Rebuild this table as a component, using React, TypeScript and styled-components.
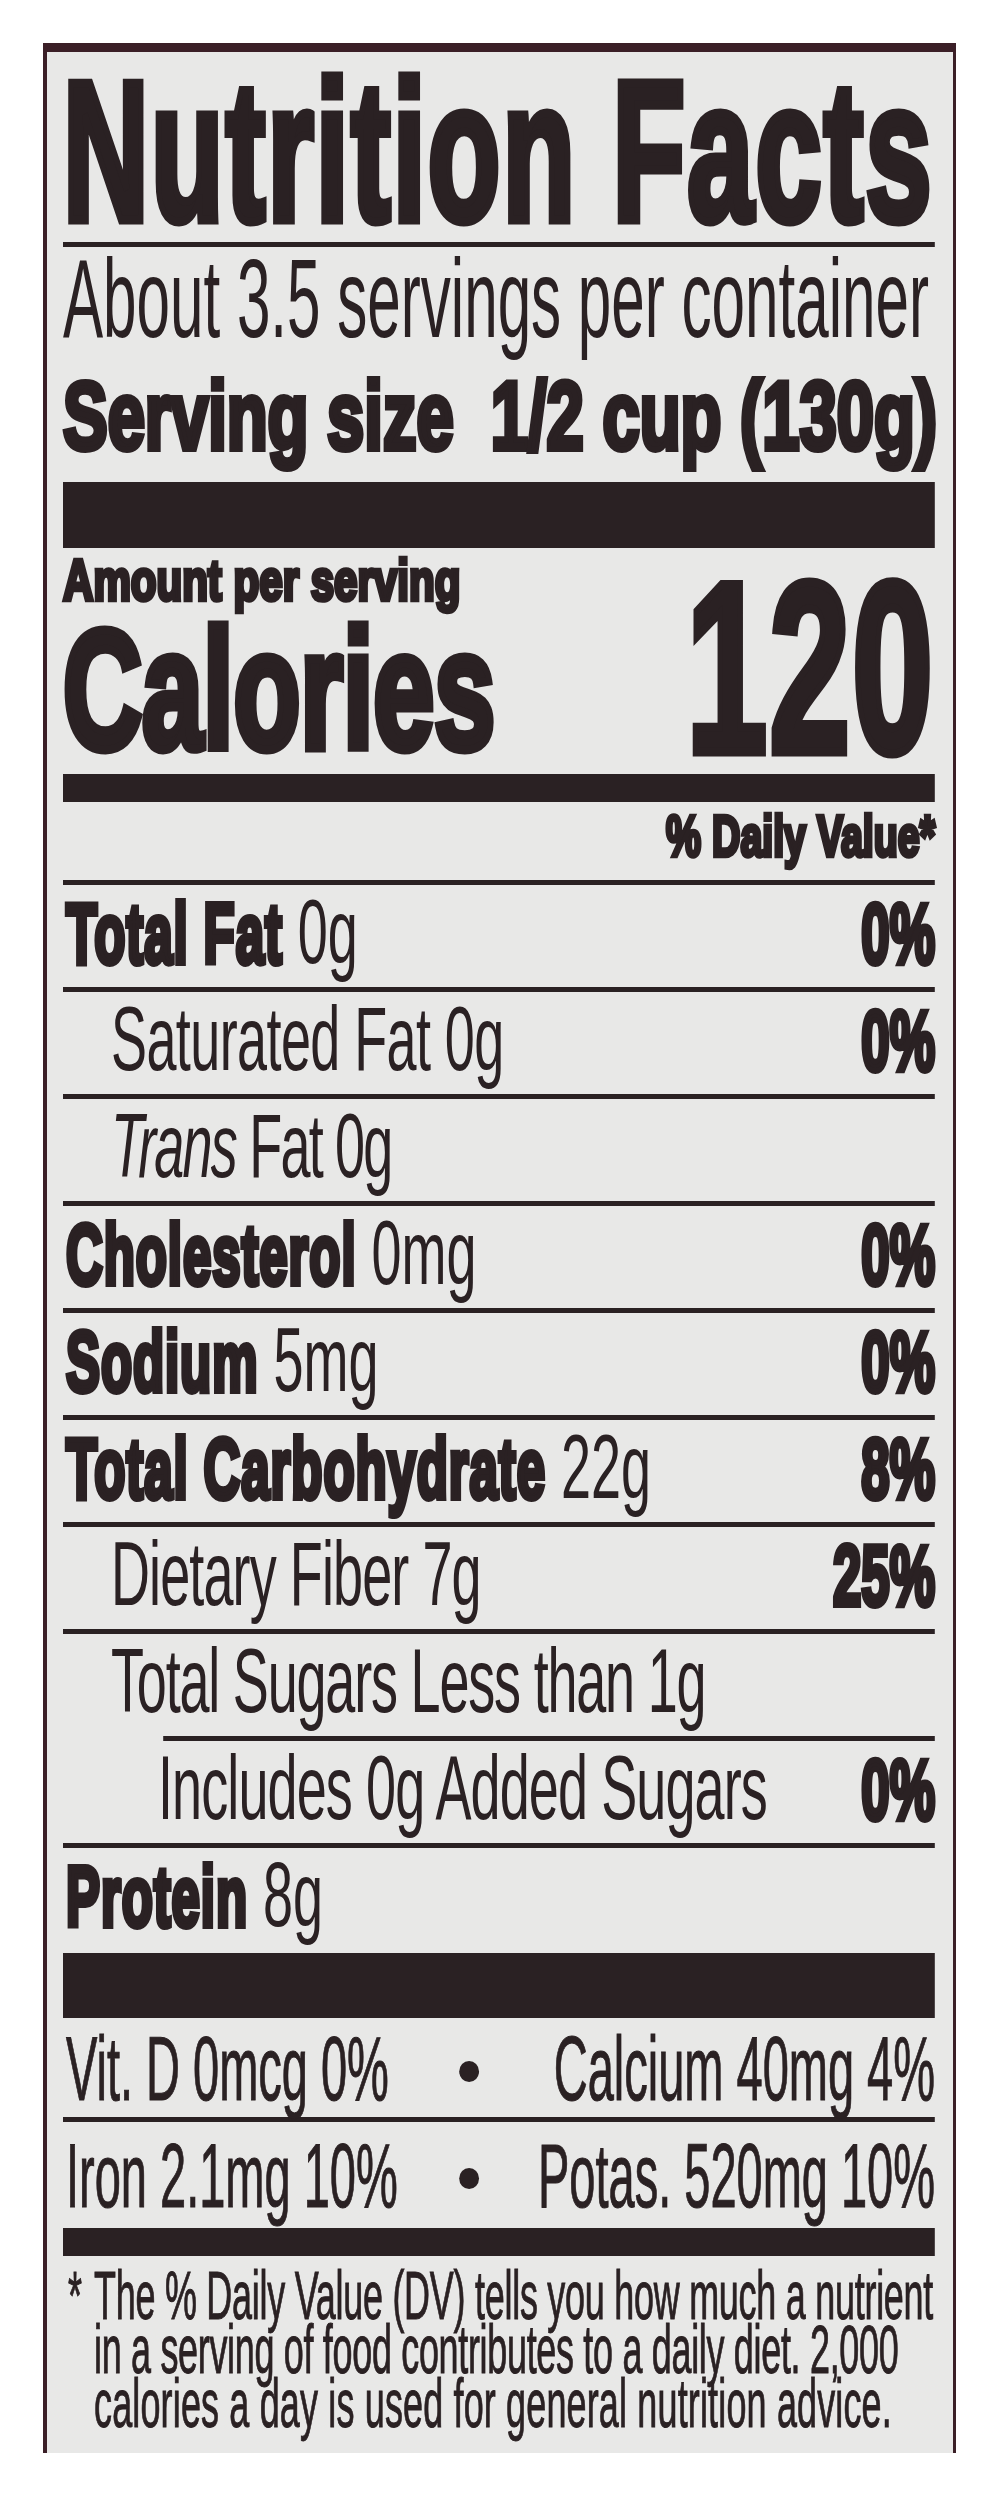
import React from 'react';
import styled, { createGlobalStyle, css } from 'styled-components';

/* The label is laid out in a "natural" space and condensed horizontally,
   like the condensed grotesque used on printed nutrition panels. */
const S = 0.6;
const CONTENT = 872;
const INNER = +(CONTENT / S).toFixed(2);
const nat = (v: number, k = 1) => +(v / (S * k)).toFixed(2);

const INK = '#2a2123';
const FRAME = '#3b1f27';
const PAPER = '#e8e8e7';

const stretch = (k: number) => css`
  transform: scaleX(${k});
  transform-origin: left center;
`;

const condense = (k: number) => css`
  box-sizing: border-box;
  width: ${+(INNER / k).toFixed(2)}px;
  transform: scaleX(${k});
  transform-origin: left center;
`;

const GlobalStyle = createGlobalStyle`
  html, body { margin: 0; padding: 0; background: #ffffff; }
  body { font-family: "Liberation Sans", Arial, Helvetica, sans-serif; }
`;

const Page = styled.main`
  padding: 43px 0 45px 43px;
`;

const Panel = styled.section`
  box-sizing: border-box;
  width: 913px;
  overflow: hidden;
  background: ${PAPER};
  border-top: 9px solid ${FRAME};
  border-left: 4px solid ${FRAME};
  border-right: 3px solid ${FRAME};
  padding: 10px 18px 0 16px;
`;

const Squeeze = styled.div`
  width: ${INNER}px;
  transform: scaleX(${S});
  transform-origin: 0 0;
  color: ${INK};
  white-space: nowrap;
  font-family: "Liberation Sans", Arial, Helvetica, sans-serif;
`;

const Heading = styled.h1`
  margin: 0;
  font-size: 198px;
  line-height: 180px;
  font-weight: 700;
  letter-spacing: 3.6px;
  -webkit-text-stroke: 9px ${INK};
`;

const Rule = styled.div<{ $h: number; $inset?: number }>`
  height: ${(p) => p.$h}px;
  margin-left: ${(p) => p.$inset ?? 0}px;
  background: ${INK};
`;

const Servings = styled.p`
  margin: 0;
  font-size: 112px;
  line-height: 103px;
  font-weight: 400;
  ${stretch(0.895)}
`;

const ServingSize = styled.p`
  margin: 0;
  font-size: 97px;
  line-height: 132px;
  font-weight: 700;
  white-space: pre;
  -webkit-text-stroke: 6px ${INK};
  ${stretch(1.15)}
`;

const CalorieBlock = styled.div`
  display: flex;
  justify-content: space-between;
  align-items: flex-end;
  padding-bottom: 7px;
`;

const CalorieLabels = styled.div`
  flex: 1;
  min-width: 0;
  display: flex;
  flex-direction: column;
`;

const AmountPer = styled.div`
  font-size: 57px;
  line-height: 64px;
  font-weight: 700;
  -webkit-text-stroke: 4.5px ${INK};
  ${stretch(1.23)}
`;

const CaloriesWord = styled.div`
  font-size: 169px;
  line-height: 155px;
  font-weight: 700;
  -webkit-text-stroke: 9px ${INK};
  ${stretch(1.08)}
`;

const CaloriesValue = styled.div`
  flex: none;
  font-size: 243px;
  line-height: 198px;
  font-weight: 700;
  letter-spacing: 3px;
  -webkit-text-stroke: 9px ${INK};
`;

const DailyValueHead = styled.div`
  font-size: 57px;
  line-height: 68px;
  font-weight: 700;
  text-align: right;
  padding-bottom: 10px;
  -webkit-text-stroke: 4.5px ${INK};
  ${condense(1.15)}
`;

const INDENT = [nat(3), nat(48), nat(95)];

const NutrientRow = styled.div<{ $level: number; $pad?: number }>`
  display: flex;
  justify-content: space-between;
  align-items: baseline;
  font-size: 90px;
  line-height: 94px;
  padding: 0 0 ${(p) => p.$pad ?? 8}px ${(p) => INDENT[p.$level]}px;
`;

const NutrientLabel = styled.span``;

const NutrientName = styled.b`
  font-size: 85px;
  line-height: 1;
  font-weight: 700;
  letter-spacing: 1.5px;
  -webkit-text-stroke: 6px ${INK};
`;

const NutrientAmount = styled.span<{ $ls: number }>`
  letter-spacing: ${(p) => p.$ls}px;
`;

const Emphasis = styled.i`
  font-style: italic;
`;

const Percent = styled.b`
  font-size: 85px;
  line-height: 1;
  font-weight: 700;
  -webkit-text-stroke: 6px ${INK};
`;

const VK = 0.87;

const VitaminRow = styled.div<{ $top: number; $bottom: number }>`
  display: grid;
  grid-template-columns: ${nat(384, VK)}px ${nat(38, VK)}px 1fr;
  align-items: center;
  font-size: 90px;
  line-height: 94px;
  padding: ${(p) => p.$top}px 0 ${(p) => p.$bottom}px ${nat(3, VK)}px;
  -webkit-text-stroke: 1px ${INK};
  ${condense(VK)}
`;

const VitaminStart = styled.span`
  justify-self: start;
`;

const VitaminEnd = styled.span`
  justify-self: end;
`;

const Dot = styled.span`
  justify-self: center;
  width: ${nat(20, VK)}px;
  height: 21px;
  margin-top: 4px;
  border-radius: 50%;
  background: ${INK};
`;

const FK = 0.88;

const Footnote = styled.div`
  display: grid;
  grid-template-columns: ${nat(31, FK)}px 1fr;
  font-size: 68px;
  line-height: 54px;
  padding: 12px 0 23px;
  -webkit-text-stroke: 1px ${INK};
  ${condense(FK)}
`;

const Star = styled.span`
  padding-left: ${nat(5, FK)}px;
`;

const FootLines = styled.div``;

const FootLine = styled.span<{ $ls: number }>`
  display: block;
  letter-spacing: ${(p) => p.$ls}px;
`;

type Nutrient = {
  name?: string;
  amount: React.ReactNode;
  dv?: string;
  level: number;
  ls?: number;
  rule?: 'full' | 'inset';
};

const NUTRIENTS: Nutrient[] = [
  { name: 'Total Fat', amount: ' 0g', dv: '0%', level: 0 },
  { amount: 'Saturated Fat 0g', dv: '0%', level: 1, ls: -1 },
  {
    amount: (
      <>
        <Emphasis>Trans</Emphasis> Fat 0g
      </>
    ),
    level: 1,
    ls: -3,
  },
  { name: 'Cholesterol', amount: ' 0mg', dv: '0%', level: 0 },
  { name: 'Sodium', amount: ' 5mg', dv: '0%', level: 0 },
  { name: 'Total Carbohydrate', amount: ' 22g', dv: '8%', level: 0 },
  { amount: 'Dietary Fiber 7g', dv: '25%', level: 1, ls: -1.5 },
  { amount: 'Total Sugars Less than 1g', level: 1, ls: -2, rule: 'inset' },
  { amount: 'Includes 0g Added Sugars', dv: '0%', level: 2, ls: -1.5 },
];

const FOOTNOTE = [
  { text: 'The % Daily Value (DV) tells you how much a nutrient', ls: -0.45 },
  { text: 'in a serving of food contributes to a daily diet. 2,000', ls: -0.55 },
  { text: 'calories a day is used for general nutrition advice.', ls: 0.35 },
];

export default function App() {
  return (
    <Page>
      <GlobalStyle />
      <Panel>
        <Squeeze>
          <Heading>Nutrition Facts</Heading>
          <Rule $h={5} />
          <Servings>About 3.5 servings per container</Servings>
          <ServingSize>{'Serving size  1/2 cup (130g)'}</ServingSize>
          <Rule $h={66} />
          <CalorieBlock>
            <CalorieLabels>
              <AmountPer>Amount per serving</AmountPer>
              <CaloriesWord>Calories</CaloriesWord>
            </CalorieLabels>
            <CaloriesValue>120</CaloriesValue>
          </CalorieBlock>
          <Rule $h={28} />
          <DailyValueHead>% Daily Value*</DailyValueHead>
          <Rule $h={5} />
          {NUTRIENTS.map((n, i) => (
            <React.Fragment key={i}>
              <NutrientRow $level={n.level}>
                <NutrientLabel>
                  {n.name && <NutrientName>{n.name}</NutrientName>}
                  <NutrientAmount $ls={n.ls ?? 0}>{n.amount}</NutrientAmount>
                </NutrientLabel>
                {n.dv && <Percent>{n.dv}</Percent>}
              </NutrientRow>
              <Rule $h={5} $inset={n.rule === 'inset' ? nat(100) : 0} />
            </React.Fragment>
          ))}
          <NutrientRow $level={0} $pad={11}>
            <NutrientLabel>
              <NutrientName>Protein</NutrientName>
              <NutrientAmount $ls={0}> 8g</NutrientAmount>
            </NutrientLabel>
          </NutrientRow>
          <Rule $h={65} />
          <VitaminRow $top={4} $bottom={1}>
            <VitaminStart>Vit. D 0mcg 0%</VitaminStart>
            <Dot />
            <VitaminEnd>Calcium 40mg 4%</VitaminEnd>
          </VitaminRow>
          <Rule $h={5} />
          <VitaminRow $top={7} $bottom={5}>
            <VitaminStart>Iron 2.1mg 10%</VitaminStart>
            <Dot />
            <VitaminEnd>Potas. 520mg 10%</VitaminEnd>
          </VitaminRow>
          <Rule $h={28} />
          <Footnote>
            <Star>*</Star>
            <FootLines>
              {FOOTNOTE.map((l) => (
                <FootLine key={l.text} $ls={l.ls}>
                  {l.text}
                </FootLine>
              ))}
            </FootLines>
          </Footnote>
        </Squeeze>
      </Panel>
    </Page>
  );
}
